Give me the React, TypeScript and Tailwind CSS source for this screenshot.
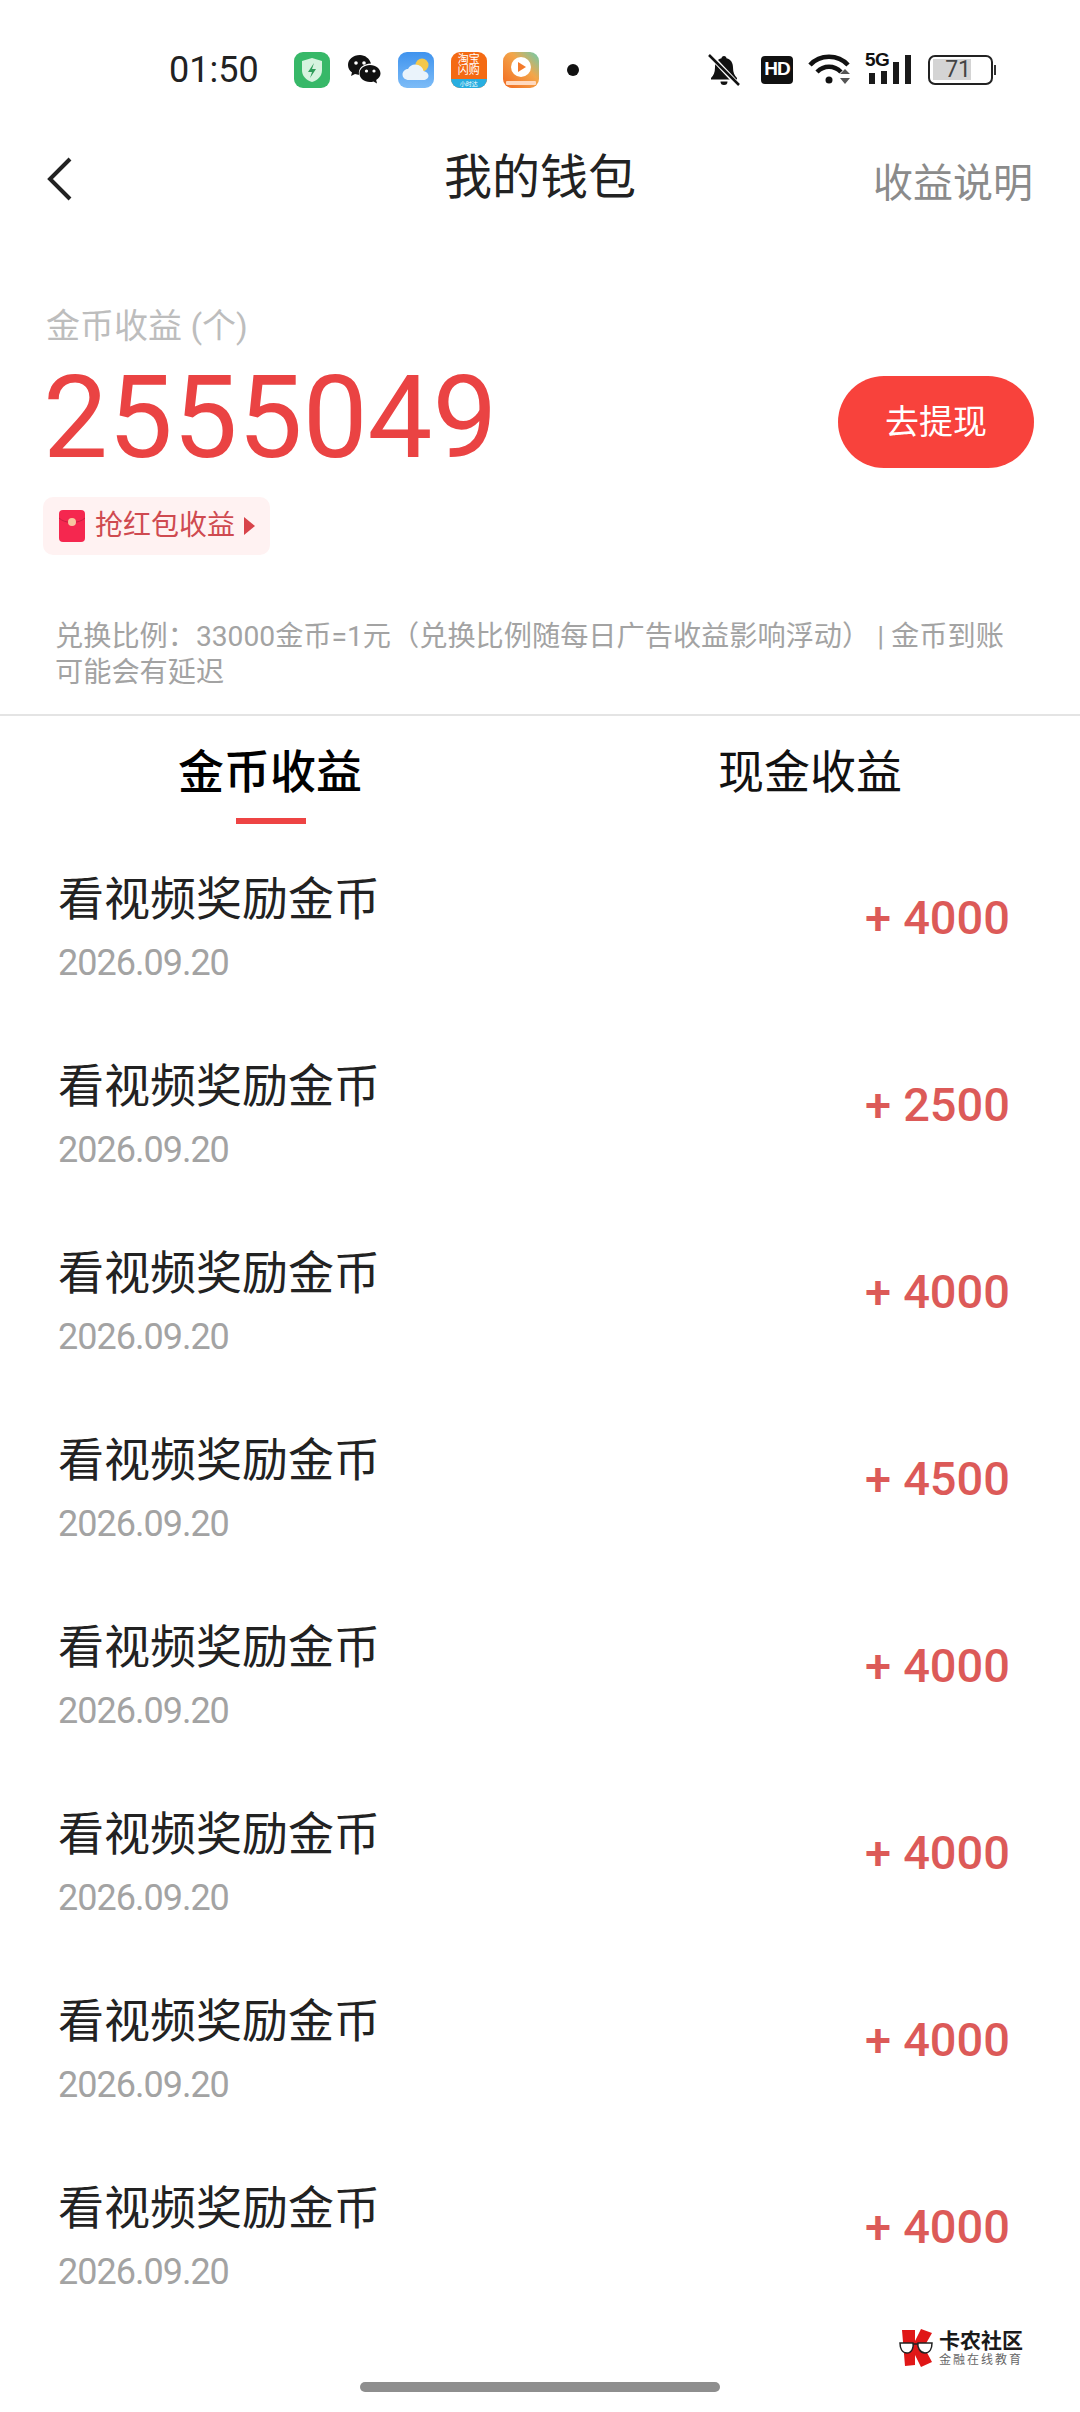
import React from "react";

const cjk = "font-['Roboto','Noto_Sans_CJK_SC',sans-serif]";

function Row({ amount }: { amount: string }) {
  return (
    <div className="flex h-[187px] items-start justify-between pl-[58px] pr-[70px]">
      <div className="flex flex-col">
        <span className="h-[64px] text-[46px] leading-[64px] text-[#222222]">看视频奖励金币</span>
        <span className="h-[64px] text-[36px] leading-[64px] tracking-[-1px] text-[#a3a3a3]">2026.09.20</span>
      </div>
      <span className="mt-[19px] flex h-[64px] items-center text-[47px] font-medium text-[#dc5a58]">
        <span className="mr-[12px]">+</span>
        {amount}
      </span>
    </div>
  );
}

function AppIcons() {
  return (
    <div className="ml-[35px] flex items-center">
      <svg width="36" height="36" viewBox="0 0 36 36">
        <rect width="36" height="36" rx="9" fill="#37b868" />
        <path d="M18 6l10 3v9c0 6-4 10-10 12-6-2-10-6-10-12V9z" fill="#d6f3df" />
        <path d="M20 11l-6 9h4l-2 6 6-9h-4z" fill="#2f9c5a" />
      </svg>
      <svg className="ml-[17px]" width="34" height="30" viewBox="0 0 34 30">
        <path d="M13 0C6 0 1 4.500 1 10c0 3 1.500 5.500 4 7.500L4 21l4-2c1.500.5 3 .7 4 .7C11 13 16 9 24 8.500 22.500 3.500 18 0 13 0z" fill="#111" />
        <path d="M23 10c-6 0-10.500 4-10.500 8.500S17 27 23 27c1 0 2.500-.2 3.500-.6L30 28.500l-.8-3.500C32 23.300 33.500 21 33.500 18.500 33.500 14 29 10 23 10z" fill="#111" />
        <circle cx="9" cy="8" r="1.800" fill="#fff" />
        <circle cx="17" cy="8" r="1.800" fill="#fff" />
        <circle cx="19.500" cy="16" r="1.600" fill="#fff" />
        <circle cx="27" cy="16" r="1.600" fill="#fff" />
      </svg>
      <svg className="ml-[17px]" width="36" height="36" viewBox="0 0 36 36">
        <defs>
          <linearGradient id="wx" x1="0" y1="0" x2="0" y2="1">
            <stop offset="0" stopColor="#3f93ee" />
            <stop offset="1" stopColor="#7dbcf7" />
          </linearGradient>
        </defs>
        <rect width="36" height="36" rx="9" fill="url(#wx)" />
        <circle cx="24" cy="13" r="6.500" fill="#f5c84b" />
        <path d="M11 28c-4 0-6.500-2.500-6.500-5.500S7 17 10 17c1.500-3 4-4.500 7-4.500 5 0 8 3 8.500 6.500 3 .5 5 2.500 5 4.800 0 2.700-2.500 4.200-5 4.200z" fill="#eaf3fb" />
      </svg>
      <div className="ml-[17px] flex h-[36px] w-[36px] flex-col overflow-hidden rounded-[9px] bg-[#f46a13] text-center text-white">
        <span className="mt-[2px] text-[11px] leading-[11px]">淘宝</span>
        <span className="text-[11px] leading-[12px]">闪购</span>
        <span className="mt-auto h-[9px] bg-[#28aee0] text-[6px] leading-[9px]">小时达</span>
      </div>
      <svg className="ml-[16px]" width="36" height="36" viewBox="0 0 36 36">
        <defs>
          <linearGradient id="vd" x1="0" y1="1" x2="1" y2="0">
            <stop offset="0" stopColor="#f2681f" />
            <stop offset="0.6" stopColor="#f3a64a" />
            <stop offset="1" stopColor="#66cdb0" />
          </linearGradient>
        </defs>
        <rect width="36" height="36" rx="9" fill="url(#vd)" />
        <circle cx="18" cy="15" r="10" fill="#fff" />
        <path d="M15 10l8 5-8 5z" fill="#f47a2a" />
        <rect x="3" y="29" width="30" height="4" rx="1" fill="#ffd9bf" />
      </svg>
      <span className="ml-[28px] h-[12px] w-[12px] rounded-full bg-[#111]" />
    </div>
  );
}

function SysIcons() {
  return (
    <div className="ml-auto flex items-center">
      <svg width="34" height="34" viewBox="0 0 34 34">
        <path d="M17 3c-1.500 0-2.500 1-2.500 2.300C10 6.500 8 10 8 14.500c0 5-1.500 8-4 10.500v1.500h26V25c-2.500-2.500-4-5.500-4-10.500 0-4.500-2-8-6.500-9.200C19.500 4 18.500 3 17 3z" fill="#111" />
        <path d="M13.500 28.500h7a3.500 3.500 0 01-7 0z" fill="#111" />
        <path d="M2 1l30 32" stroke="#fff" strokeWidth="5" />
        <path d="M2 2l30 30" stroke="#111" strokeWidth="2.500" />
      </svg>
      <div className="ml-[20px] flex h-[28px] w-[32px] items-center justify-center rounded-[4px] bg-[#111] font-['Liberation_Sans',sans-serif] text-[19px] font-bold tracking-[-1px] text-white">
        HD
      </div>
      <svg className="ml-[15px]" width="46" height="34" viewBox="0 0 46 34">
        <path d="M2 12C12 1 30 1 40 12" stroke="#111" strokeWidth="4.500" fill="none" />
        <path d="M9 19c7-7 17-7 24 0" stroke="#111" strokeWidth="4.500" fill="none" />
        <circle cx="21" cy="27" r="3.500" fill="#111" />
        <path d="M32 21l5-5 5 5zM32 25l5 6 5-6z" fill="#555" />
      </svg>
      <div className="relative ml-[11px] h-[34px] w-[48px]">
        <svg className="absolute inset-0" width="48" height="34" viewBox="0 0 48 34">
          <rect x="4" y="20" width="6" height="11" fill="#1a1a1a" />
          <rect x="16" y="18" width="6" height="13" fill="#1a1a1a" />
          <rect x="28" y="9" width="6" height="22" fill="#1a1a1a" />
          <rect x="40" y="2" width="6" height="29" fill="#1a1a1a" />
        </svg>
        <span className="absolute left-0 top-[-3px] font-['Liberation_Sans',sans-serif] text-[19px] font-bold leading-[20px] tracking-[-0.5px] text-[#111]">
          5G
        </span>
      </div>
      <div className="ml-[15px] flex items-center">
        <div className="flex h-[30px] w-[65px] items-center overflow-hidden rounded-[7px] border-2 border-[#222] pl-[3px]">
          <div className="flex h-[21px] w-[38px] items-center justify-end bg-[#d4d4d4]">
            <span className="text-[23px] leading-none text-[#444]">71</span>
          </div>
        </div>
        <span className="ml-[1px] h-[10px] w-[2px] bg-[#333]" />
      </div>
    </div>
  );
}

function Logo() {
  return (
    <div className="absolute left-[897px] top-[2328px] flex items-center">
      <svg width="38" height="40" viewBox="0 0 38 40">
        <path d="M5 2h13v11l6-12 11 4-8 14 8 15-11 5-6-12v10l-10 1z" fill="#e01717" />
        <path d="M3 15h13c1 4-1 10-6 10s-7-5-7-10zM21 15h14c0 5-2 10-7 10s-8-6-7-10z" fill="#fff" stroke="#222" strokeWidth="1.500" />
        <path d="M16 16h5" stroke="#222" strokeWidth="1.500" />
      </svg>
      <div className="ml-[4px] flex flex-col">
        <span className="text-[21px] font-bold leading-[24px] text-[#1a1a1a]">卡农社区</span>
        <span className="text-[12px] leading-[14px] tracking-[2px] text-[#666]">金融在线教育</span>
      </div>
    </div>
  );
}

export default function App() {
  const amounts = ["4000", "2500", "4000", "4500", "4000", "4000", "4000", "4000"];
  return (
    <div className={`relative h-[2412px] w-[1080px] overflow-hidden bg-white ${cjk}`}>
      <div className="flex h-[140px] items-center pb-[1px] pl-[169px] pr-[84px]">
        <span className="text-[36px] text-[#222]">01:50</span>
        <AppIcons />
        <SysIcons />
      </div>

      <div className="relative flex h-[76px] items-center justify-center">
        <svg className="absolute left-[44px] top-[16px]" width="32" height="46" viewBox="0 0 32 46">
          <path d="M26 3L6 23l20 20" stroke="#222" strokeWidth="4" fill="none" />
        </svg>
        <span className="text-[48px] text-[#222]">我的钱包</span>
        <span className="absolute right-[47px] top-[14px] text-[40px] text-[#8b8b8b]">收益说明</span>
      </div>

      <div className="mt-[85px] pl-[46px] text-[34px] leading-[50px] text-[#bdbdbd]">金币收益 (个)</div>

      <div className="mt-[2px] flex items-center justify-between pl-[43px] pr-[46px]">
        <span className="text-[115.500px] leading-[130px] text-[#ea4343]">2555049</span>
        <button className="mt-[8px] flex h-[92px] w-[196px] items-center justify-center rounded-full bg-[#f8423c] text-[34px] text-white">
          去提现
        </button>
      </div>

      <div className="ml-[43px] mt-[14px] flex h-[58px] w-[227px] items-center rounded-[10px] bg-[#fff2f2] pl-[16px]">
        <svg width="26" height="32" viewBox="0 0 26 32">
          <rect width="26" height="32" rx="4" fill="#f5274f" />
          <path d="M0 8c6 6 20 6 26 0" stroke="#c81e40" strokeWidth="1" fill="none" />
          <circle cx="13" cy="12" r="4" fill="#f7c6a0" />
        </svg>
        <span className="ml-[10px] text-[28px] text-[#cf4a50]">抢红包收益</span>
        <svg className="ml-[9px]" width="11" height="18" viewBox="0 0 11 18">
          <path d="M0 0l11 9-11 9z" fill="#d8434a" />
        </svg>
      </div>

      <p className="ml-[55px] mt-[64px] w-[1000px] text-[28.200px] leading-[36px] text-[#a3a3a3]">
        {"兑换比例\uFF1A33000金币=1元\uFF08兑换比例随每日广告收益影响浮动\uFF09 | 金币到账"}
        <br />
        可能会有延迟
      </p>

      <div className="mt-[23px] h-[2px] bg-[#e4e4e4]" />

      <div className="flex h-[110px]">
        <div className="relative flex w-[540px] justify-center">
          <span className="pt-[24px] text-[46px] font-medium leading-[64px] text-black">金币收益</span>
          <span className="absolute left-[236px] top-[102px] h-[6px] w-[70px] bg-[#ee4444]" />
        </div>
        <div className="flex w-[540px] justify-center">
          <span className="pt-[24px] text-[46px] leading-[64px] text-[#111]">现金收益</span>
        </div>
      </div>

      <div className="mt-[41px]">
        {amounts.map((a, i) => (
          <Row key={i} amount={a} />
        ))}
      </div>

      <Logo />
      <div className="absolute left-[360px] top-[2382px] h-[10px] w-[360px] rounded-full bg-[#8e8e8e]" />
    </div>
  );
}
